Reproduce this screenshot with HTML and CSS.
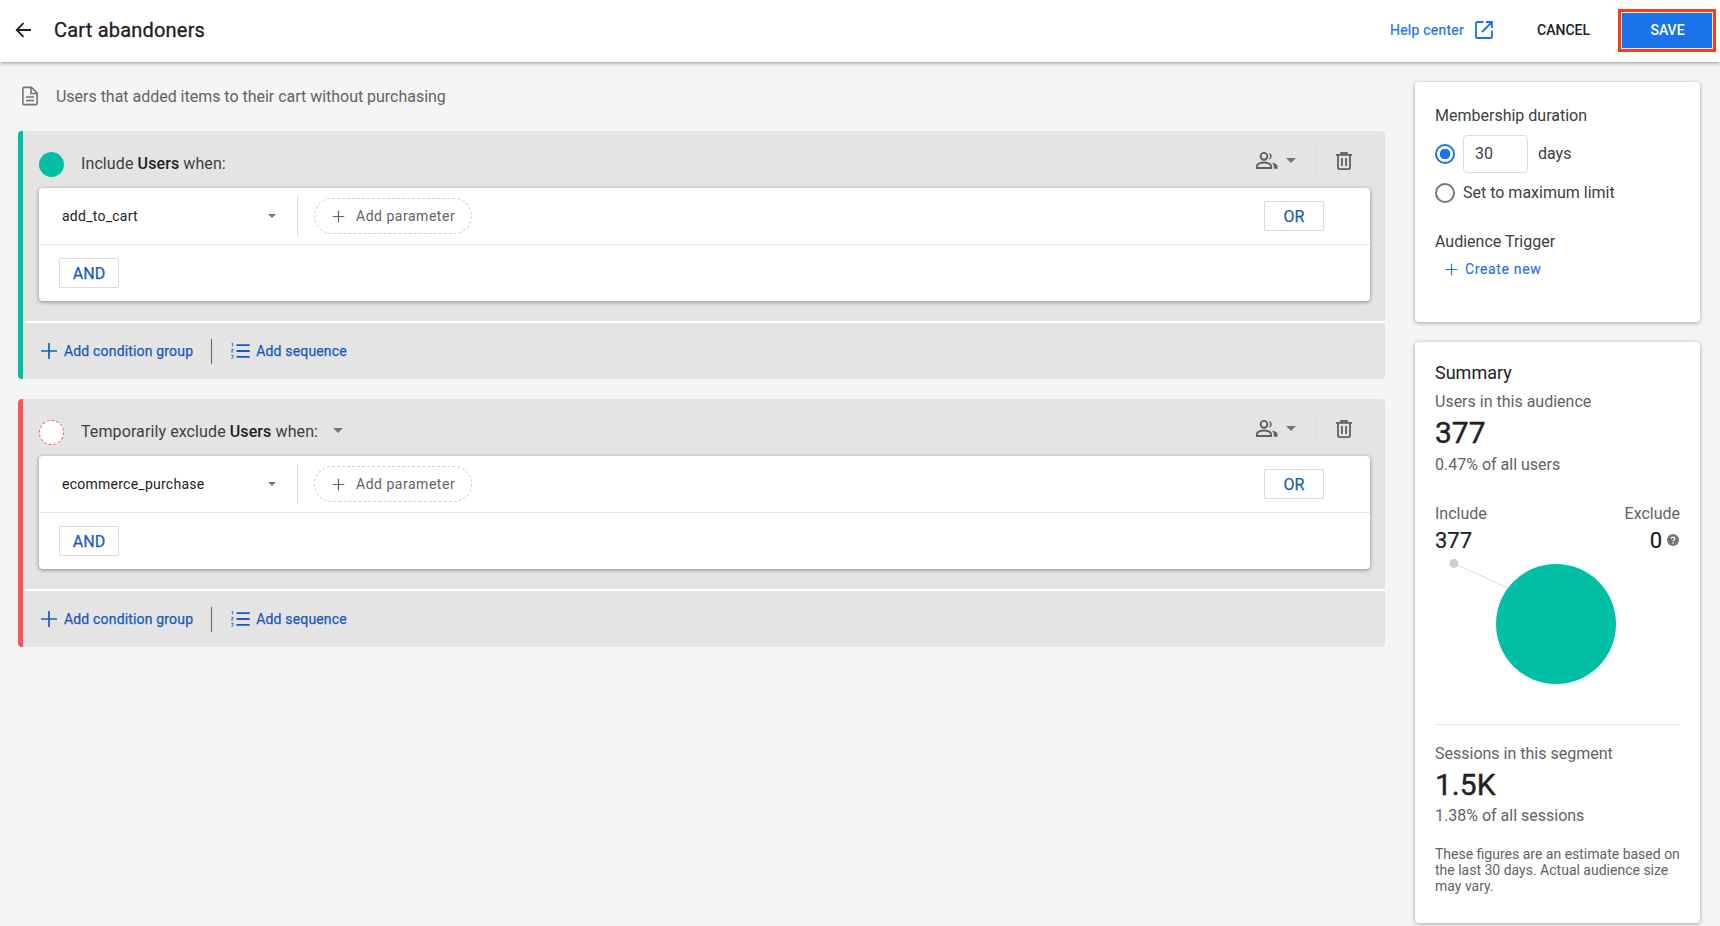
FILE: index.html
```html
<!DOCTYPE html>
<html lang="en">
<head>
<meta charset="utf-8">
<title>Cart abandoners</title>
<link rel="stylesheet" href="styles.css">
</head>
<body>
<svg class="defs" width="0" height="0" aria-hidden="true">
  <symbol id="i-plus" viewBox="0 0 18 18"><path d="M9 1v16M1 9h16" fill="none" stroke="currentColor" stroke-width="1.7"/></symbol>
  <symbol id="i-list" viewBox="0 0 19 16">
    <path d="M5.500 2.200h13.200M5.500 8h13.200M5.500 13.800h13.200" fill="none" stroke="currentColor" stroke-width="1.800"/>
    <path d="M.6.6 1.600 0v3.400M.3 6.400h2l-2 2.600h2.100M.3 12.400h2l-1 1.100c1.300 0 1.300 1.900-.1 1.900H.3" fill="none" stroke="currentColor" stroke-width=".8"/>
  </symbol>
  <symbol id="i-people" viewBox="0 0 22 17">
    <circle cx="8" cy="4.300" r="3.400" fill="none" stroke="currentColor" stroke-width="1.900"/>
    <path d="M.9 16v-1.800c0-2.500 4.200-3.700 7.100-3.700s7.100 1.200 7.100 3.700V16z" fill="none" stroke="currentColor" stroke-width="1.900"/>
    <path d="M12.800.9a3.500 3.500 0 0 1 0 6.900 5.600 5.600 0 0 0 0-6.900zM15.300 10.500c3 .5 6.200 1.600 6.200 3.700V16.800h-3.700v-2.600c0-1.500-1-2.800-2.500-3.700z" fill="currentColor"/>
  </symbol>
  <symbol id="i-trash" viewBox="0 0 16 18">
    <path d="M0 2.800h16M5.200 2.800V.9h5.600v1.900M2 2.800V16a1.200 1.200 0 0 0 1.200 1.100h9.600A1.200 1.200 0 0 0 14 16V2.800M5.900 6v7.900M10.100 6v7.900" fill="none" stroke="currentColor" stroke-width="1.800"/>
  </symbol>
</svg>

<header class="topbar">
  <svg class="back" width="16" height="16" viewBox="0 0 16 16"><path d="M16 8H2M8.500 1.200 1.700 8l6.800 6.800" fill="none" stroke="#202124" stroke-width="1.800"/></svg>
  <h1 class="title">Cart abandoners</h1>
  <a class="help">Help center</a>
  <svg class="open" width="18" height="18" viewBox="0 0 18 18"><path d="M8.500 1H2a1 1 0 0 0-1 1v14a1 1 0 0 0 1 1h14a1 1 0 0 0 1-1V9.500M11 1h6v6M17 1 7 11" fill="none" stroke="#1a73e8" stroke-width="1.800"/></svg>
  <span class="cancel">CANCEL</span>
  <div class="save-outline"><button class="save">SAVE</button></div>
</header>

<main class="page">
  <section class="left">
    <div class="desc">
      <svg width="16" height="20" viewBox="0 0 16 19"><path d="M1.900.9h7.600L15.100 6.500V16.900a1.200 1.200 0 0 1-1.200 1.200H2.100a1.200 1.200 0 0 1-1.200-1.200V2.100A1.200 1.200 0 0 1 1.900.9zM9 1v6h6M4 10.500h8M4 14h8" fill="none" stroke="#757575" stroke-width="1.600"/></svg>
      <span>Users that added items to their cart without purchasing</span>
    </div>

    <div class="group group-include">
      <div class="group-head">
        <span class="dot dot-include"></span>
        <span class="group-label">Include <b>Users</b> when:</span>
        <div class="head-tools">
          <svg class="people" width="22" height="17"><use href="#i-people"/></svg>
          <span class="caret caret-tool"></span>
          <span class="tool-rule"></span>
          <svg class="trash" width="16" height="18"><use href="#i-trash"/></svg>
        </div>
      </div>
      <div class="card">
        <div class="card-row">
          <div class="event"><span>add_to_cart</span><i class="caret caret-small"></i></div>
          <span class="event-rule"></span>
          <div class="param"><svg width="13" height="13"><use href="#i-plus"/></svg><span>Add parameter</span></div>
          <button class="logic logic-or">OR</button>
        </div>
        <div class="card-foot"><button class="logic">AND</button></div>
      </div>
      <div class="group-foot">
        <svg class="foot-plus" width="18" height="18"><use href="#i-plus"/></svg>
        <span>Add condition group</span>
        <i class="foot-rule"></i>
        <svg class="foot-list" width="19" height="16"><use href="#i-list"/></svg>
        <span>Add sequence</span>
      </div>
    </div>

    <div class="group group-exclude">
      <div class="group-head">
        <span class="dot dot-exclude"></span>
        <span class="group-label">Temporarily exclude <b>Users</b> when:</span>
        <span class="caret caret-label"></span>
        <div class="head-tools">
          <svg class="people" width="22" height="17"><use href="#i-people"/></svg>
          <span class="caret caret-tool"></span>
          <span class="tool-rule"></span>
          <svg class="trash" width="16" height="18"><use href="#i-trash"/></svg>
        </div>
      </div>
      <div class="card">
        <div class="card-row">
          <div class="event"><span>ecommerce_purchase</span><i class="caret caret-small"></i></div>
          <span class="event-rule"></span>
          <div class="param"><svg width="13" height="13"><use href="#i-plus"/></svg><span>Add parameter</span></div>
          <button class="logic logic-or">OR</button>
        </div>
        <div class="card-foot"><button class="logic">AND</button></div>
      </div>
      <div class="group-foot">
        <svg class="foot-plus" width="18" height="18"><use href="#i-plus"/></svg>
        <span>Add condition group</span>
        <i class="foot-rule"></i>
        <svg class="foot-list" width="19" height="16"><use href="#i-list"/></svg>
        <span>Add sequence</span>
      </div>
    </div>
  </section>

  <aside class="right">
    <div class="panel panel-top">
      <div class="label-dark">Membership duration</div>
      <div class="radio-row radio-row-first">
        <span class="radio radio-on"></span>
        <span class="days-input">30</span>
        <span class="label-dark">days</span>
      </div>
      <div class="radio-row radio-row-second">
        <span class="radio"></span>
        <span class="label-dark">Set to maximum limit</span>
      </div>
      <div class="label-dark trigger">Audience Trigger</div>
      <div class="create"><svg width="13" height="13"><use href="#i-plus"/></svg><span>Create new</span></div>
    </div>

    <div class="panel panel-summary">
      <div class="summary-title">Summary</div>
      <div class="muted users-label">Users in this audience</div>
      <div class="big big-users">377</div>
      <div class="muted">0.47% of all users</div>
      <div class="split">
        <div><div class="muted">Include</div><div class="mid">377</div></div>
        <div class="split-right">
          <div class="muted">Exclude</div>
          <div class="mid mid-flex"><span>0</span><svg width="12" height="12" viewBox="0 0 12 12"><circle cx="6" cy="6" r="6" fill="#757575"/><path d="M4.300 4.700c0-2.200 3.500-2.200 3.500-.1 0 1.400-1.700 1.400-1.700 2.700" fill="none" stroke="#fff" stroke-width="1.200"/><circle cx="6.100" cy="9.100" r=".8" fill="#fff"/></svg></div>
        </div>
      </div>
      <svg class="chart" width="245" height="128" viewBox="0 0 245 128">
        <path d="M19 7.500 73 32" stroke="#dadada" stroke-width="1" fill="none"/>
        <circle cx="19" cy="7.500" r="4.500" fill="#cfcfcf"/>
        <circle cx="121" cy="68" r="60" fill="#00bfa5"/>
      </svg>
      <div class="rule"></div>
      <div class="muted sessions">Sessions in this segment</div>
      <div class="big big-sessions">1.5K</div>
      <div class="muted">1.38% of all sessions</div>
      <p class="note">These figures are an estimate based on the last 30 days. Actual audience size may vary.</p>
    </div>
  </aside>
</main>
</body>
</html>
```
FILE: styles.css
```css
* { box-sizing: border-box; }
html, body { margin: 0; height: 926px; overflow: hidden; }
body { background: #f5f5f5; font-family: Roboto, "Noto Sans", sans-serif; color: #212121; }
.defs { position: absolute; }
svg { display: block; flex: none; }
button { font-family: inherit; cursor: pointer; }

.topbar {
  height: 62px; background: #fff; display: flex; align-items: center; padding-bottom: 2px;
  box-shadow: 0 1px 4px rgba(0,0,0,.4); position: relative; z-index: 2;
}
.back { margin-left: 15px; }
.title { margin: 0 0 0 23px; font-size: 20px; font-weight: 400; -webkit-text-stroke: .3px #202124; flex: 1; color: #202124; letter-spacing: .2px; }
.help { font-size: 14px; color: #1a73e8; letter-spacing: .25px; -webkit-text-stroke: .2px #1a73e8; }
.open { margin-left: 11px; }
.cancel { margin-left: 44px; font-size: 14px; font-weight: 500; color: #202124; }
.save-outline { margin: 0 4px 0 28px; border: 3px solid #f4400f; padding: 1px; background: #e8eaed; width: 98px; height: 43px; display: flex; }
.save { flex: 1; border: 0; background: #1a73e8; color: #fff; font-size: 14px; font-weight: 500; padding: 0 0 0 1px; }

.page { display: flex; padding: 20px 20px 0 18px; gap: 30px; align-items: flex-start; }
.left { width: 1367px; }
.right { width: 285px; display: flex; flex-direction: column; gap: 20px; }

.desc { display: flex; align-items: center; height: 28px; margin-bottom: 21px; color: #5f6368; font-size: 16px; }
.desc svg { margin: 0 18px 0 4px; }
.desc span { letter-spacing: -.02px; }

.group { background: #e4e4e4; border-radius: 4px; height: 248px; border-left: 5px solid; margin-bottom: 20px; }
.group-include { border-left-color: #00bfa5; }
.group-exclude { border-left-color: #ff5252; }
.group-head { display: flex; align-items: center; height: 57px; padding: 10px 15px 0 16px; position: relative; }
.dot { width: 25px; height: 25px; border-radius: 50%; margin-right: 17px; flex: none; }
.dot-include { background: #00bfa5; }
.dot-exclude { background: #fff; border: 1px dashed #ff5252; }
.group-label { font-size: 16px; color: #3c4043; letter-spacing: .1px; padding-bottom: 2px; }
.group-label b { font-weight: 500; color: #202124; }
.caret { width: 0; height: 0; border-style: solid; border-color: #757575 transparent transparent; display: block; flex: none; }
.caret-label { border-width: 5px 5px 0; margin-left: 15px; margin-top: -4px; }
.caret-tool { border-width: 5px 5px 0; margin-left: 8px; }
.caret-small { border-width: 4px 4px 0; }
.head-tools { margin-left: auto; display: flex; align-items: center; color: #616161; height: 30px; margin-top: -8px; margin-right: 15px; }
.tool-rule { width: 1px; height: 30px; background: #dcdcdc; margin: 0 19px 0 20px; }
.trash { margin-right: 3px; }

.card { background: #fff; width: 1331px; height: 113px; margin-left: 16px; border-radius: 4px; box-shadow: 0 1px 4px rgba(0,0,0,.4); }
.card-row { height: 57px; display: flex; align-items: center; border-bottom: 1px solid #e6e6e6; padding-right: 46px; }
.event { width: 258px; padding: 0 21px 0 23px; display: flex; justify-content: space-between; align-items: center; font-size: 14px; letter-spacing: .25px; color: #202124; }
.event-rule { width: 1px; height: 40px; background: #dcdcdc; }
.param { margin-left: 16px; width: 158px; height: 36px; border: 1px dashed #d0d0d0; border-radius: 18px; display: flex; align-items: center; padding-left: 17px; gap: 11px; color: #5f6368; font-size: 14px; letter-spacing: .52px; }
.logic { height: 30px; width: 60px; padding: 0; background: #fff; border: 1px solid #dadce0; border-radius: 1px; color: #185abc; font-size: 16px; font-weight: 400; -webkit-text-stroke: .25px #185abc; }
.logic-or { margin-left: auto; }
.card-foot { padding: 13px 0 0 20px; }

.group-foot { height: 58px; margin-top: 20px; border-top: 2px solid #fff; display: flex; align-items: center; padding-left: 16px; margin-left: 1px; color: #185abc; font-size: 14px; font-weight: 400; letter-spacing: .17px; -webkit-text-stroke: .25px #185abc; }
.foot-plus { margin-right: 6px; }
.foot-rule { width: 1px; height: 25px; background: #5f6368; margin: 0 19px 0 18px; }
.foot-list { margin-right: 6px; }

.panel { background: #fff; border-radius: 4px; box-shadow: 0 1px 4px rgba(0,0,0,.35); width: 285px; padding: 0 20px; }
.panel-top { height: 240px; padding-top: 24px; }
.panel-summary { height: 581px; padding-top: 21px; }
.label-dark { font-size: 16px; color: #3c4043; line-height: 20px; }
.radio-row { display: flex; align-items: center; }
.radio-row-first { margin-top: 9px; height: 38px; }
.radio-row-second { margin-top: 1px; height: 38px; }
.radio { width: 20px; height: 20px; border-radius: 50%; border: 2px solid #757575; margin-right: 8px; flex: none; background: #fff; }
.radio-on { border-color: #1a73e8; background: radial-gradient(circle, #1a73e8 0 5px, #fff 5.5px); }
.days-input { width: 65px; height: 38px; border: 1px solid #dadce0; border-radius: 4px; margin-right: 10px; padding-left: 11px; line-height: 36px; font-size: 16px; color: #3c4043; }
.trigger { margin-top: 20px; }
.create { margin: 7px 0 0 10px; display: flex; align-items: center; gap: 7px; color: #1a73e8; font-size: 14px; letter-spacing: .65px; -webkit-text-stroke: .15px #1a73e8; height: 20px; }

.summary-title { font-size: 18px; line-height: 20px; color: #202124; }
.muted { font-size: 16px; line-height: 20px; color: #5f6368; }
.users-label { margin-top: 9px; }
.big { font-size: 30px; line-height: 36px; color: #202124; font-weight: 400; -webkit-text-stroke: .4px #202124; }
.big-users { margin: 3px 0 4px; }
.big-sessions { margin: 3px 0 3px; }
.split { display: flex; justify-content: space-between; margin-top: 29px; }
.split-right { text-align: right; }
.mid { font-size: 22px; line-height: 26px; margin-top: 4px; color: #202124; -webkit-text-stroke: .2px #202124; }
.mid-flex { display: flex; justify-content: flex-end; align-items: center; gap: 5px; }
.mid-flex svg { margin-right: 1px; margin-top: -2px; }
.chart { margin-top: 2px; }
.rule { height: 1px; background: #e6e6e6; margin-top: 40px; }
.sessions { margin-top: 19px; }
.note { margin: 20px 0 0; font-size: 14px; line-height: 16px; color: #5f6368; }
```
